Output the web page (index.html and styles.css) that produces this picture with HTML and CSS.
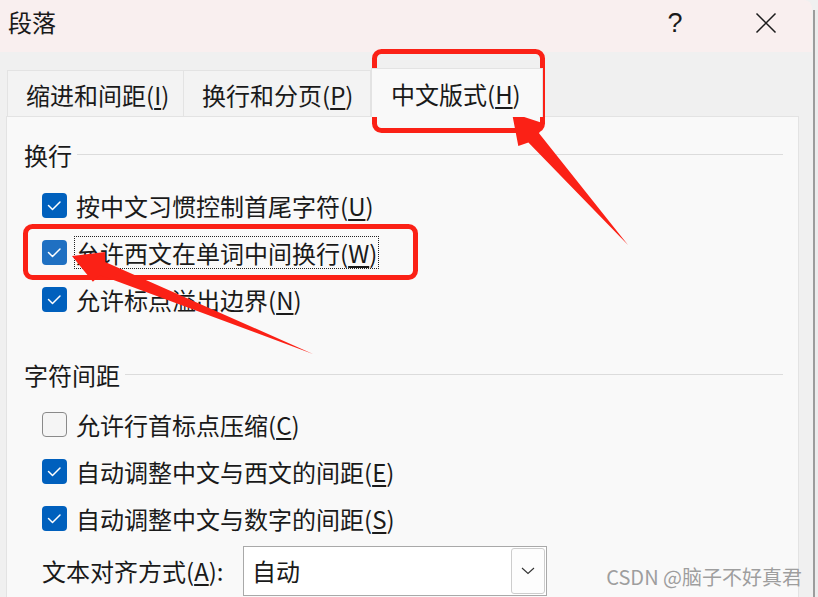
FILE: index.html
```html
<!DOCTYPE html>
<html lang="zh-CN">
<head>
<meta charset="utf-8">
<title>段落</title>
<link rel="stylesheet" href="styles.css">
</head>
<body>
<div class="screen">
  <div class="window">
    <header class="titlebar">
      <div class="title">段落</div>
      <div class="tb-btn help">?</div>
      <div class="tb-btn close">
        <svg width="22" height="22" viewBox="0 0 22 22"><path d="M1.5 1.5 L20.5 20.5 M20.5 1.5 L1.5 20.5" stroke="#1b1b1b" stroke-width="1.5" fill="none"/></svg>
      </div>
    </header>
    <div class="body">
      <nav class="tabs">
        <div class="tab t1">缩进和间距(<u>I</u>)</div>
        <div class="tab t2">换行和分页(<u>P</u>)</div>
        <div class="tab t3 active">中文版式(<u>H</u>)</div>
      </nav>
      <section class="panel">
        <div class="group-title"><span>换行</span></div>
        <div class="rows rows-a">
          <div class="row"><span class="cb on"><svg viewBox="0 0 25 25"><path d="M6.5 12.5 L10.5 16.5 L18 9"/></svg></span><span class="label">按中文习惯控制首尾字符(<u>U</u>)</span></div>
          <div class="row"><span class="cb on hover"><svg viewBox="0 0 25 25"><path d="M6.5 12.5 L10.5 16.5 L18 9"/></svg></span><span class="label focus">允许西文在单词中间换行(<u>W</u>)</span></div>
          <div class="row"><span class="cb on"><svg viewBox="0 0 25 25"><path d="M6.5 12.5 L10.5 16.5 L18 9"/></svg></span><span class="label">允许标点溢出边界(<u>N</u>)</span></div>
        </div>
        <div class="group-title g2"><span>字符间距</span></div>
        <div class="rows rows-b">
          <div class="row"><span class="cb off"></span><span class="label">允许行首标点压缩(<u>C</u>)</span></div>
          <div class="row"><span class="cb on"><svg viewBox="0 0 25 25"><path d="M6.5 12.5 L10.5 16.5 L18 9"/></svg></span><span class="label">自动调整中文与西文的间距(<u>E</u>)</span></div>
          <div class="row"><span class="cb on"><svg viewBox="0 0 25 25"><path d="M6.5 12.5 L10.5 16.5 L18 9"/></svg></span><span class="label">自动调整中文与数字的间距(<u>S</u>)</span></div>
        </div>
        <div class="align-row">
          <span class="align-label">文本对齐方式(<u>A</u>):</span>
          <div class="select">
            <span class="select-value">自动</span>
            <span class="select-btn"><svg width="14" height="8" viewBox="0 0 14 8"><path d="M1 1 L7 6.5 L13 1" stroke="#333" stroke-width="1.1" fill="none"/></svg></span>
          </div>
        </div>
      </section>
    </div>
  </div>
  <div class="edge"></div>

  <svg class="annot" width="818" height="597" viewBox="0 0 818 597">
    <rect x="374.5" y="51.5" width="168" height="79" rx="7" ry="7" fill="none" stroke="#fb2116" stroke-width="5"/>
    <rect x="25.5" y="226.5" width="390" height="51" rx="7" ry="7" fill="none" stroke="#fb2116" stroke-width="5"/>
    <polygon points="512,113 544,123.6 539,133.2 628,245 528.4,142.4 518.3,146" fill="#fb2116"/>
    <polygon points="72,256 104.9,252.1 105.2,261.9 313,354 100,274.9 92.9,281.7" fill="#fb2116"/>
  </svg>
  <div class="watermark">CSDN @脑子不好真君</div>
</div>
</body>
</html>
```

FILE: styles.css
```css
* { box-sizing: border-box; }

html, body {
  margin: 0;
  padding: 0;
}

body {
  width: 818px;
  height: 597px;
  overflow: hidden;
  background: #f0f0f0;
  font-family: "Noto Sans CJK SC", "Noto Sans", sans-serif;
  color: #1a1a1a;
}

.screen {
  position: relative;
  display: flex;
  width: 818px;
  height: 597px;
}

.window {
  width: 812px;
  height: 597px;
  background: #f0f0f0;
  border-top-right-radius: 8px;
  overflow: hidden;
  display: flex;
  flex-direction: column;
}

.edge {
  margin-left: 1px;
  margin-top: 10px;
  width: 5px;
  border-left: 2px solid #9c9c9c;
  background: #ececec;
}

/* title bar */
.titlebar {
  height: 52px;
  flex: none;
  background: #f9efef;
  display: flex;
  align-items: flex-start;
}

.title {
  flex: 1;
  padding-left: 8px;
  padding-top: 5px;
  font-size: 24px;
  line-height: 34px;
}

.tb-btn {
  width: 46px;
  height: 46px;
  display: flex;
  justify-content: center;
  align-items: center;
}

.help {
  margin-right: 45px;
  font-family: "Liberation Sans", "Noto Sans", sans-serif;
  font-size: 27px;
  line-height: 34px;
  padding-bottom: 1px;
}

.close {
  margin-right: 23px;
}

/* body */
.body {
  flex: 1;
  padding: 18px 13px 0 6px;
  display: flex;
  flex-direction: column;
}

.tabs {
  display: flex;
  align-items: flex-end;
  height: 46px;
  padding-left: 1px;
}

.tab {
  height: 46px;
  background: #f3f3f3;
  border: 1px solid #e3e3e3;
  border-bottom: none;
  font-size: 24px;
  line-height: 44px;
  padding: 2px 0 0 18px;
  white-space: nowrap;
}

.t1 { width: 177px; }
.t2 { width: 187px; border-left: none; }
.t3 { width: 172px; }

.tab.active {
  background: #f9f9f9;
  padding-top: 3px;
  padding-left: 19px;
  position: relative;
  z-index: 1;
  margin-bottom: -1px;
  height: 49px;
}

u {
  text-decoration: underline;
  text-decoration-thickness: 1.5px;
  text-underline-offset: 3px;
}

.panel {
  flex: 1;
  background: #f9f9f9;
  border: 1px solid #e3e3e3;
  border-bottom: none;
  padding: 21px 15px 0 17px;
  display: flex;
  flex-direction: column;
}

.group-title {
  display: flex;
  align-items: center;
  height: 34px;
  font-size: 24px;
  line-height: 34px;
}

.group-title::after {
  content: "";
  flex: 1;
  height: 1px;
  background: #dcdcdc;
  margin-left: 5px;
  margin-top: -2px;
}

.g2 {
  margin-top: 35px;
}

.rows {
  display: flex;
  flex-direction: column;
  padding-left: 18px;
}

.rows-a { margin-top: 10px; }
.rows-b { margin-top: 9px; }

.row {
  height: 47px;
  display: flex;
  align-items: center;
}

.cb {
  width: 25px;
  height: 25px;
  border-radius: 4px;
  flex: none;
  display: flex;
}

.cb svg {
  width: 25px;
  height: 25px;
}

.cb svg path {
  fill: none;
  stroke: #ffffff;
  stroke-width: 1.5;
  stroke-linecap: round;
  stroke-linejoin: round;
}

.cb.on { background: #0060bd; }
.cb.on.hover { background: #1f70c2; }

.cb.off {
  background: #f5f5f5;
  border: 1px solid #8a8a8a;
}

.label {
  margin-left: 7px;
  font-size: 24px;
  line-height: 31px;
  padding: 0 1px;
  border: 1px dotted transparent;
  white-space: nowrap;
}

.label.focus {
  border-color: #222;
}

.align-row {
  margin-top: 4px;
  padding-left: 18px;
  display: flex;
  align-items: center;
  height: 50px;
}

.align-label {
  width: 201px;
  flex: none;
  font-size: 24px;
  line-height: 34px;
  white-space: nowrap;
}

.select {
  width: 304px;
  height: 50px;
  background: #ffffff;
  border: 1px solid #a9a9a9;
  display: flex;
  align-items: center;
  padding: 0 1px 0 8px;
}

.select-value {
  flex: 1;
  font-size: 24px;
  line-height: 34px;
}

.select-btn {
  width: 34px;
  height: 46px;
  border: 1px solid #cdcdcd;
  border-radius: 3px;
  background: #fdfdfd;
  display: flex;
  justify-content: center;
  align-items: center;
}

/* overlays */
.annot {
  position: absolute;
  left: 0;
  top: 0;
  pointer-events: none;
}

.watermark {
  position: absolute;
  right: 16px;
  top: 563px;
  font-size: 20px;
  line-height: 28px;
  color: #9e9e9e;
  text-shadow: 0 0 1px #ffffff;
  white-space: nowrap;
}
```
